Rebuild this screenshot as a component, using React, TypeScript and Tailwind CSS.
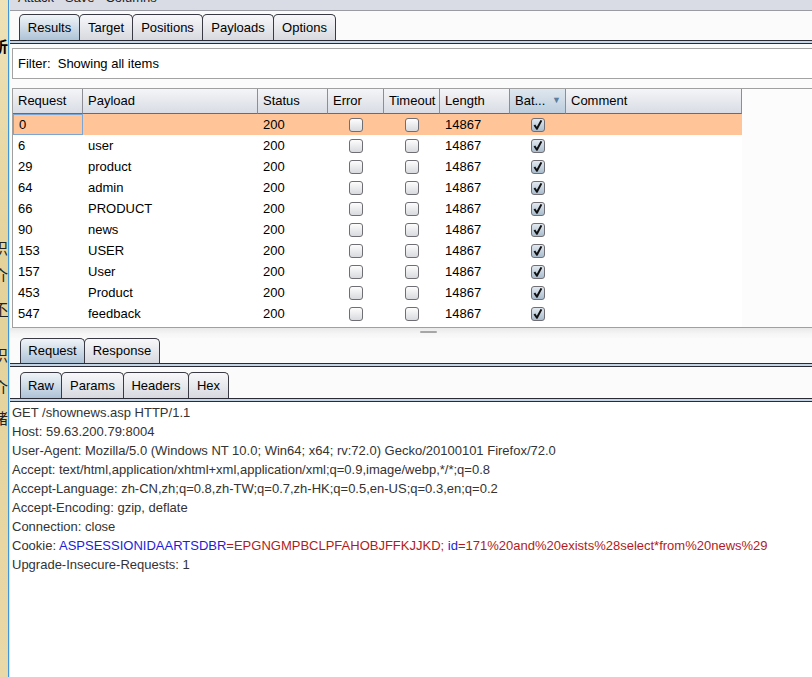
import React from "react";

const rows = [
  ["0", ""],
  ["6", "user"],
  ["29", "product"],
  ["64", "admin"],
  ["66", "PRODUCT"],
  ["90", "news"],
  ["153", "USER"],
  ["157", "User"],
  ["453", "Product"],
  ["547", "feedback"],
];

const cols = [
  { label: "Request", w: "w-[70px]" },
  { label: "Payload", w: "w-[175px]" },
  { label: "Status", w: "w-[70px]" },
  { label: "Error", w: "w-[56px]" },
  { label: "Timeout", w: "w-[56px]" },
  { label: "Length", w: "w-[70px]" },
  { label: "Bat...", w: "w-[56px]" },
  { label: "Comment", w: "w-[176px]" },
];

function Tab({ label, w, active }: { label: string; w: string; active?: boolean }) {
  return (
    <div
      className={`${w} h-full flex items-center justify-center text-[13px] text-black border border-b-0 border-[#3a3a44] rounded-t-[5px] -ml-px first:ml-0 ${
        active
          ? "bg-[linear-gradient(to_bottom,#f0f4f8,#aec3d7)]"
          : "bg-[linear-gradient(to_bottom,#f8f8fa,#d7d9df)]"
      }`}
    >
      {label}
    </div>
  );
}

function TabBand() {
  return <div className="h-[4px] shrink-0 border-y border-[#2b2b36] bg-[#c4d5e6]" />;
}

function Check({ on }: { on?: boolean }) {
  return (
    <div
      className={`w-[14px] h-[14px] rounded-[3px] border border-[#6e6e74] flex items-center justify-center ${
        on
          ? "bg-[linear-gradient(to_bottom,#e2e9f0,#a9bccd)]"
          : "bg-[linear-gradient(to_bottom,#fdfdfd,#d9dade)]"
      }`}
    >
      {on && (
        <svg width="12" height="12" viewBox="0 0 12 12">
          <path d="M2.4 6 L4.9 9.8 L9.4 1.4" fill="none" stroke="#111" strokeWidth="2" strokeLinejoin="round" />
        </svg>
      )}
    </div>
  );
}

function Desktop() {
  const chars: [number, string, string][] = [
    [38, "析", "font-bold text-black"],
    [240, "识", "text-[#222]"],
    [267, "介", "text-[#222]"],
    [301, "不", "text-[#222] underline"],
    [347, "识", "text-[#222]"],
    [379, "介", "text-[#222]"],
    [410, "绪", "text-[#222]"],
  ];
  return (
    <div className="relative w-[8px] h-full overflow-hidden bg-[linear-gradient(to_bottom,#efe2b8,#e4d29a_40%,#ead9a8)]">
      {chars.map(([top, c, cls]) => (
        <span
          key={top}
          className={`absolute left-[-7px] text-[15px] leading-none font-['Noto_Sans_CJK_SC',sans-serif] ${cls}`}
          style={{ top }}
        >
          {c}
        </span>
      ))}
    </div>
  );
}

export default function App() {
  return (
    <div className="w-[812px] h-[677px] overflow-hidden flex bg-[#fbfbfb] font-['Liberation_Sans',Arial,sans-serif]">
      <Desktop />
      <div className="w-px bg-[#3f96dd]" />
      <div className="w-px bg-[#dce6ef]" />
      <div className="flex-1 min-w-0 flex flex-col">
        {/* menu strip (cut off) */}
        <div className="h-[11px] shrink-0 overflow-hidden bg-[#d9dce4] border-b border-[#9b9ba3] pl-[8px]">
          <div className="mt-[-10px] text-[13px] leading-[16px] text-[#222] whitespace-pre">Attack   Save   Columns</div>
        </div>

        <div className="h-[26px] mt-[3px] pl-[9px] flex shrink-0">
          <Tab label="Results" w="w-[61px]" active />
          <Tab label="Target" w="w-[54px]" />
          <Tab label="Positions" w="w-[71px]" />
          <Tab label="Payloads" w="w-[72px]" />
          <Tab label="Options" w="w-[63px]" />
        </div>
        <TabBand />

        <div className="mt-[4px] ml-[2px] h-[31px] shrink-0 border border-r-0 border-[#a3a3a3] bg-white flex items-center pl-[5px] text-[13px] text-black">
          Filter:&nbsp; Showing all items
        </div>

        {/* results table */}
        <div className="mt-[9px] ml-[2px] h-[240px] shrink-0 border-y border-l border-[#a0a0a0] bg-[#fcfcfc] flex flex-col">
          <div className="flex h-[25px] shrink-0">
            {cols.map((c) => (
              <div
                key={c.label}
                className={`${c.w} h-full flex items-center justify-between pl-[5px] pr-[4px] text-[13px] text-black border-r border-b border-r-[#8d8d95] border-b-[#6a6a70] ${
                  c.label === "Bat..."
                    ? "bg-[linear-gradient(to_bottom,#dfe7ef,#bccddd)]"
                    : "bg-[linear-gradient(to_bottom,#f4f5f8,#d9dce4)]"
                }`}
              >
                <span>{c.label}</span>
                {c.label === "Bat..." && <span className="text-[9px] text-[#5c7d9c]">▼</span>}
              </div>
            ))}
          </div>
          <div className="w-[729px] flex-1 bg-white">
            {rows.map(([id, payload], i) => (
              <div key={id} className={`flex h-[21px] text-[13px] text-black ${i === 0 ? "bg-[#ffc598]" : ""}`}>
                <div className={`w-[70px] flex items-center pl-[5px] ${i === 0 ? "border border-[#7ba6d4] pl-[4px]" : ""}`}>{id}</div>
                <div className="w-[175px] flex items-center pl-[5px]">{payload}</div>
                <div className="w-[70px] flex items-center pl-[5px]">200</div>
                <div className="w-[56px] flex items-center justify-center">
                  <Check />
                </div>
                <div className="w-[56px] flex items-center justify-center">
                  <Check />
                </div>
                <div className="w-[70px] flex items-center pl-[5px]">14867</div>
                <div className="w-[56px] flex items-center justify-center">
                  <Check on />
                </div>
                <div className="w-[176px]" />
              </div>
            ))}
          </div>
        </div>

        {/* splitter */}
        <div className="h-[10px] shrink-0 bg-[linear-gradient(to_bottom,#e9e9e9,#f6f6f6_60%,#f9f9f9)] pl-[410px] pt-[3px]">
          <div className="w-[17px] h-[2px] rounded-full bg-[#a6a6a6]" />
        </div>

        <div className="h-[25px] pl-[10px] flex shrink-0">
          <Tab label="Request" w="w-[65px]" active />
          <Tab label="Response" w="w-[76px]" />
        </div>
        <TabBand />

        <div className="h-[26px] mt-[5px] pl-[10px] flex shrink-0">
          <Tab label="Raw" w="w-[42px]" active />
          <Tab label="Params" w="w-[63px]" />
          <Tab label="Headers" w="w-[66px]" />
          <Tab label="Hex" w="w-[41px]" />
        </div>
        <TabBand />

        <div className="flex-1 bg-white pl-[2px] pt-px text-[13px] leading-[19px] text-[#333] whitespace-pre">
          <div>GET /shownews.asp HTTP/1.1</div>
          <div>Host: 59.63.200.79:8004</div>
          <div>User-Agent: Mozilla/5.0 (Windows NT 10.0; Win64; x64; rv:72.0) Gecko/20100101 Firefox/72.0</div>
          <div>Accept: text/html,application/xhtml+xml,application/xml;q=0.9,image/webp,*/*;q=0.8</div>
          <div>Accept-Language: zh-CN,zh;q=0.8,zh-TW;q=0.7,zh-HK;q=0.5,en-US;q=0.3,en;q=0.2</div>
          <div>Accept-Encoding: gzip, deflate</div>
          <div>Connection: close</div>
          <div>
            Cookie: <span className="text-[#1d1dd6]">ASPSESSIONIDAARTSDBR</span>
            <span className="text-[#b01c1c]">=EPGNGMPBCLPFAHOBJFFKJJKD; </span>
            <span className="text-[#1d1dd6]">id</span>
            <span className="text-[#b01c1c]">=171%20and%20exists%28select*from%20news%29</span>
          </div>
          <div>Upgrade-Insecure-Requests: 1</div>
        </div>
      </div>
    </div>
  );
}
